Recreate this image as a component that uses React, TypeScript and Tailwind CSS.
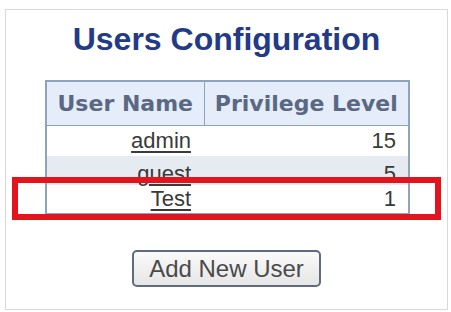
const users = [
  { name: 'admin', level: 15, bg: 'bg-white', h: 'h-[31px]', pad: '' },
  { name: 'guest', level: 5, bg: 'bg-[#e6ebf1]', h: 'h-[29px]', pad: 'pt-[6px]' },
  { name: 'Test', level: 1, bg: 'bg-white', h: 'h-[29px]', pad: '' },
];

export default function App() {
  return (
    <div className="bg-white w-[451px] h-[312px] pt-[9px] pl-[5px]">
      <div className="w-[443px] h-[301px] border border-[#d9d9d9] flex flex-col items-center">
        <h1 className="mt-[13px] text-[32px] leading-[32px] font-bold text-[#233a86] font-['Liberation_Sans',Arial,sans-serif]">
          Users Configuration
        </h1>
        <div className="relative mt-[25px] ml-[2px]">
          <table className="w-[365px] border-collapse border-2 border-[#8ea3bd] font-['Liberation_Sans',Arial,sans-serif]">
            <thead>
              <tr className="h-[44px] bg-[#e4edf9]">
                <th className="w-[158px] border border-[#8ea3bd] px-[6px] text-center text-[22px] font-bold text-[#5b6883] font-['DejaVu_Sans',Verdana,sans-serif] whitespace-nowrap">
                  User Name
                </th>
                <th className="border border-[#8ea3bd] px-[6px] text-center text-[22px] font-bold text-[#5b6883] font-['DejaVu_Sans',Verdana,sans-serif] whitespace-nowrap">
                  Privilege Level
                </th>
              </tr>
            </thead>
            <tbody>
              {users.map(u => (
                <tr key={u.name} className={`${u.bg} ${u.h}`}>
                  <td className={`${u.pad} pr-[13px] text-right text-[22px] leading-none text-[#3a3a3a]`}>
                    <a href="#" className="underline underline-offset-[3px]">{u.name}</a>
                  </td>
                  <td className={`${u.pad} pr-[12px] text-right text-[22px] leading-none text-[#3a3a3a]`}>{u.level}</td>
                </tr>
              ))}
            </tbody>
          </table>
          <div className="absolute left-[-33px] top-[97px] w-[429px] h-[43px] border-[6px] border-[#e3141c]" />
        </div>
        <button className="mt-[35px] h-[37px] w-[189px] rounded-[5px] border-2 border-[#5f6c80] bg-gradient-to-b from-[#fafafa] to-[#e6e6e6] text-[24px] leading-none text-[#4a4a4a] font-['Liberation_Sans',Arial,sans-serif]">
          Add New User
        </button>
      </div>
    </div>
  );
}
